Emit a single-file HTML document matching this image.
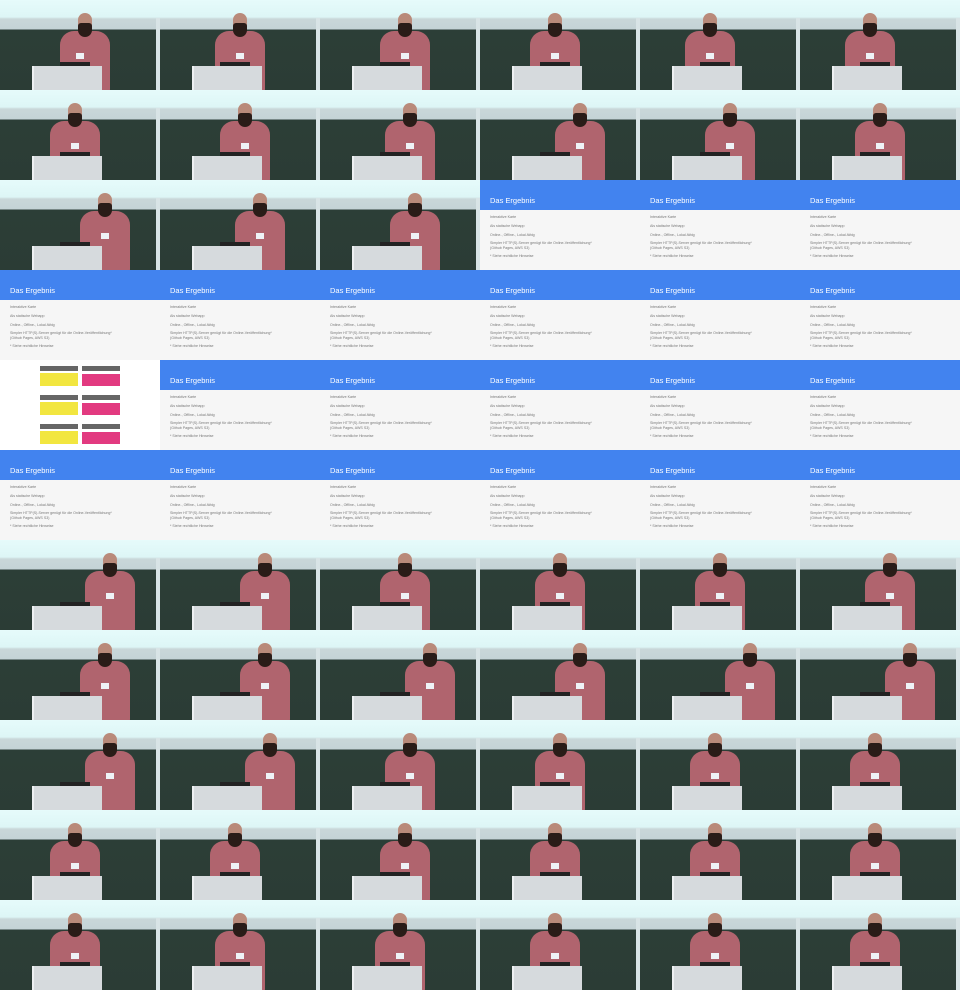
<!DOCTYPE html>
<html><head><meta charset="utf-8"><style>
*{margin:0;padding:0;box-sizing:border-box}
body{width:960px;height:990px;overflow:hidden;background:#fff;font-family:"Liberation Sans",sans-serif}
.g{display:grid;grid-template-columns:repeat(6,160px);grid-auto-rows:90px}
.c{position:relative;width:160px;height:90px;overflow:hidden}
.s{background:linear-gradient(#e6fbfb 0,#ddf6f6 17px,#c9d7d9 19px,#c4d3d6 29px,#2c3e37 30px,#2b3c35 100%)}
.s::before{content:"";position:absolute;right:0;top:18px;width:4px;height:72px;background:#d8e4e6}
.s::after{content:"";position:absolute;left:32px;top:66px;width:68px;height:24px;background:#d6dadd;border-left:2px solid #eef0f2}
.s i{position:absolute;top:31px;width:50px;height:62px;margin-left:-25px;background:#b0646e;border-radius:14px 14px 4px 4px}
.s i::before{content:"";position:absolute;left:18px;top:-18px;width:14px;height:20px;background:#b98a7a;border-radius:7px 7px 6px 6px}
.s i::after{content:"";position:absolute;left:18px;top:-8px;width:14px;height:14px;background:#2a1c18;border-radius:3px 3px 7px 7px}
.s b{position:absolute;top:53px;width:8px;height:6px;margin-left:-4px;background:#eef2f6}
.s u{position:absolute;left:60px;top:62px;width:30px;height:4px;background:#222}
.p{background:#f6f6f6}
.p .h{height:30px;background:#4283ef;color:#fff;font-size:7.5px;padding:17px 0 0 10px;line-height:8px}
.p .t{color:#777;font-size:3.6px;line-height:4.2px;padding:5px 0 0 10px}
.p .t div{margin-bottom:4.6px}
.m{background:#fff}
.m div{position:absolute;width:38px;height:26px}
</style></head><body><div class="g">
<div class="c s"><i style="left:85px"></i><b style="left:80px"></b><u></u></div>
<div class="c s"><i style="left:80px"></i><b style="left:80px"></b><u></u></div>
<div class="c s"><i style="left:85px"></i><b style="left:85px"></b><u></u></div>
<div class="c s"><i style="left:75px"></i><b style="left:75px"></b><u></u></div>
<div class="c s"><i style="left:70px"></i><b style="left:70px"></b><u></u></div>
<div class="c s"><i style="left:70px"></i><b style="left:70px"></b><u></u></div>

<div class="c s"><i style="left:75px"></i><b style="left:75px"></b><u></u></div>
<div class="c s"><i style="left:85px"></i><b style="left:85px"></b><u></u></div>
<div class="c s"><i style="left:90px"></i><b style="left:90px"></b><u></u></div>
<div class="c s"><i style="left:100px"></i><b style="left:100px"></b><u></u></div>
<div class="c s"><i style="left:90px"></i><b style="left:90px"></b><u></u></div>
<div class="c s"><i style="left:80px"></i><b style="left:80px"></b><u></u></div>

<div class="c s"><i style="left:105px"></i><b style="left:105px"></b><u></u></div>
<div class="c s"><i style="left:100px"></i><b style="left:100px"></b><u></u></div>
<div class="c s"><i style="left:95px"></i><b style="left:95px"></b><u></u></div>
<div class="c p"><div class="h">Das Ergebnis</div><div class="t"><div>Interaktive Karte</div><div>Als statische Webapp</div><div>Online-, Offline-, Lokal-fähig</div><div>Simpler HTTP(S)-Server genügt für die Online-Veröffentlichung*<br>(Github Pages, AWS S3)</div><div>* Siehe rechtliche Hinweise</div></div></div>
<div class="c p"><div class="h">Das Ergebnis</div><div class="t"><div>Interaktive Karte</div><div>Als statische Webapp</div><div>Online-, Offline-, Lokal-fähig</div><div>Simpler HTTP(S)-Server genügt für die Online-Veröffentlichung*<br>(Github Pages, AWS S3)</div><div>* Siehe rechtliche Hinweise</div></div></div>
<div class="c p"><div class="h">Das Ergebnis</div><div class="t"><div>Interaktive Karte</div><div>Als statische Webapp</div><div>Online-, Offline-, Lokal-fähig</div><div>Simpler HTTP(S)-Server genügt für die Online-Veröffentlichung*<br>(Github Pages, AWS S3)</div><div>* Siehe rechtliche Hinweise</div></div></div>

<div class="c p"><div class="h">Das Ergebnis</div><div class="t"><div>Interaktive Karte</div><div>Als statische Webapp</div><div>Online-, Offline-, Lokal-fähig</div><div>Simpler HTTP(S)-Server genügt für die Online-Veröffentlichung*<br>(Github Pages, AWS S3)</div><div>* Siehe rechtliche Hinweise</div></div></div>
<div class="c p"><div class="h">Das Ergebnis</div><div class="t"><div>Interaktive Karte</div><div>Als statische Webapp</div><div>Online-, Offline-, Lokal-fähig</div><div>Simpler HTTP(S)-Server genügt für die Online-Veröffentlichung*<br>(Github Pages, AWS S3)</div><div>* Siehe rechtliche Hinweise</div></div></div>
<div class="c p"><div class="h">Das Ergebnis</div><div class="t"><div>Interaktive Karte</div><div>Als statische Webapp</div><div>Online-, Offline-, Lokal-fähig</div><div>Simpler HTTP(S)-Server genügt für die Online-Veröffentlichung*<br>(Github Pages, AWS S3)</div><div>* Siehe rechtliche Hinweise</div></div></div>
<div class="c p"><div class="h">Das Ergebnis</div><div class="t"><div>Interaktive Karte</div><div>Als statische Webapp</div><div>Online-, Offline-, Lokal-fähig</div><div>Simpler HTTP(S)-Server genügt für die Online-Veröffentlichung*<br>(Github Pages, AWS S3)</div><div>* Siehe rechtliche Hinweise</div></div></div>
<div class="c p"><div class="h">Das Ergebnis</div><div class="t"><div>Interaktive Karte</div><div>Als statische Webapp</div><div>Online-, Offline-, Lokal-fähig</div><div>Simpler HTTP(S)-Server genügt für die Online-Veröffentlichung*<br>(Github Pages, AWS S3)</div><div>* Siehe rechtliche Hinweise</div></div></div>
<div class="c p"><div class="h">Das Ergebnis</div><div class="t"><div>Interaktive Karte</div><div>Als statische Webapp</div><div>Online-, Offline-, Lokal-fähig</div><div>Simpler HTTP(S)-Server genügt für die Online-Veröffentlichung*<br>(Github Pages, AWS S3)</div><div>* Siehe rechtliche Hinweise</div></div></div>

<div class="c m">
<div style="left:40px;top:4px;background:linear-gradient(#fff 0 2px,#666 2px 7px,#fff 7px 9px,#f2e640 9px 22px,#fff 22px)"></div>
<div style="left:82px;top:4px;background:linear-gradient(#fff 0 2px,#666 2px 7px,#fff 7px 10px,#e23a80 10px 22px,#fff 22px)"></div>
<div style="left:40px;top:33px;background:linear-gradient(#fff 0 2px,#666 2px 7px,#fff 7px 9px,#f2e640 9px 22px,#fff 22px)"></div>
<div style="left:82px;top:33px;background:linear-gradient(#fff 0 2px,#666 2px 7px,#fff 7px 10px,#e23a80 10px 22px,#fff 22px)"></div>
<div style="left:40px;top:62px;background:linear-gradient(#fff 0 2px,#666 2px 7px,#fff 7px 9px,#f2e640 9px 22px,#fff 22px)"></div>
<div style="left:82px;top:62px;background:linear-gradient(#fff 0 2px,#666 2px 7px,#fff 7px 10px,#e23a80 10px 22px,#fff 22px)"></div>
</div>
<div class="c p"><div class="h">Das Ergebnis</div><div class="t"><div>Interaktive Karte</div><div>Als statische Webapp</div><div>Online-, Offline-, Lokal-fähig</div><div>Simpler HTTP(S)-Server genügt für die Online-Veröffentlichung*<br>(Github Pages, AWS S3)</div><div>* Siehe rechtliche Hinweise</div></div></div>
<div class="c p"><div class="h">Das Ergebnis</div><div class="t"><div>Interaktive Karte</div><div>Als statische Webapp</div><div>Online-, Offline-, Lokal-fähig</div><div>Simpler HTTP(S)-Server genügt für die Online-Veröffentlichung*<br>(Github Pages, AWS S3)</div><div>* Siehe rechtliche Hinweise</div></div></div>
<div class="c p"><div class="h">Das Ergebnis</div><div class="t"><div>Interaktive Karte</div><div>Als statische Webapp</div><div>Online-, Offline-, Lokal-fähig</div><div>Simpler HTTP(S)-Server genügt für die Online-Veröffentlichung*<br>(Github Pages, AWS S3)</div><div>* Siehe rechtliche Hinweise</div></div></div>
<div class="c p"><div class="h">Das Ergebnis</div><div class="t"><div>Interaktive Karte</div><div>Als statische Webapp</div><div>Online-, Offline-, Lokal-fähig</div><div>Simpler HTTP(S)-Server genügt für die Online-Veröffentlichung*<br>(Github Pages, AWS S3)</div><div>* Siehe rechtliche Hinweise</div></div></div>
<div class="c p"><div class="h">Das Ergebnis</div><div class="t"><div>Interaktive Karte</div><div>Als statische Webapp</div><div>Online-, Offline-, Lokal-fähig</div><div>Simpler HTTP(S)-Server genügt für die Online-Veröffentlichung*<br>(Github Pages, AWS S3)</div><div>* Siehe rechtliche Hinweise</div></div></div>

<div class="c p"><div class="h">Das Ergebnis</div><div class="t"><div>Interaktive Karte</div><div>Als statische Webapp</div><div>Online-, Offline-, Lokal-fähig</div><div>Simpler HTTP(S)-Server genügt für die Online-Veröffentlichung*<br>(Github Pages, AWS S3)</div><div>* Siehe rechtliche Hinweise</div></div></div>
<div class="c p"><div class="h">Das Ergebnis</div><div class="t"><div>Interaktive Karte</div><div>Als statische Webapp</div><div>Online-, Offline-, Lokal-fähig</div><div>Simpler HTTP(S)-Server genügt für die Online-Veröffentlichung*<br>(Github Pages, AWS S3)</div><div>* Siehe rechtliche Hinweise</div></div></div>
<div class="c p"><div class="h">Das Ergebnis</div><div class="t"><div>Interaktive Karte</div><div>Als statische Webapp</div><div>Online-, Offline-, Lokal-fähig</div><div>Simpler HTTP(S)-Server genügt für die Online-Veröffentlichung*<br>(Github Pages, AWS S3)</div><div>* Siehe rechtliche Hinweise</div></div></div>
<div class="c p"><div class="h">Das Ergebnis</div><div class="t"><div>Interaktive Karte</div><div>Als statische Webapp</div><div>Online-, Offline-, Lokal-fähig</div><div>Simpler HTTP(S)-Server genügt für die Online-Veröffentlichung*<br>(Github Pages, AWS S3)</div><div>* Siehe rechtliche Hinweise</div></div></div>
<div class="c p"><div class="h">Das Ergebnis</div><div class="t"><div>Interaktive Karte</div><div>Als statische Webapp</div><div>Online-, Offline-, Lokal-fähig</div><div>Simpler HTTP(S)-Server genügt für die Online-Veröffentlichung*<br>(Github Pages, AWS S3)</div><div>* Siehe rechtliche Hinweise</div></div></div>
<div class="c p"><div class="h">Das Ergebnis</div><div class="t"><div>Interaktive Karte</div><div>Als statische Webapp</div><div>Online-, Offline-, Lokal-fähig</div><div>Simpler HTTP(S)-Server genügt für die Online-Veröffentlichung*<br>(Github Pages, AWS S3)</div><div>* Siehe rechtliche Hinweise</div></div></div>

<div class="c s"><i style="left:110px"></i><b style="left:110px"></b><u></u></div>
<div class="c s"><i style="left:105px"></i><b style="left:105px"></b><u></u></div>
<div class="c s"><i style="left:85px"></i><b style="left:85px"></b><u></u></div>
<div class="c s"><i style="left:80px"></i><b style="left:80px"></b><u></u></div>
<div class="c s"><i style="left:80px"></i><b style="left:80px"></b><u></u></div>
<div class="c s"><i style="left:90px"></i><b style="left:90px"></b><u></u></div>

<div class="c s"><i style="left:105px"></i><b style="left:105px"></b><u></u></div>
<div class="c s"><i style="left:105px"></i><b style="left:105px"></b><u></u></div>
<div class="c s"><i style="left:110px"></i><b style="left:110px"></b><u></u></div>
<div class="c s"><i style="left:100px"></i><b style="left:100px"></b><u></u></div>
<div class="c s"><i style="left:110px"></i><b style="left:110px"></b><u></u></div>
<div class="c s"><i style="left:110px"></i><b style="left:110px"></b><u></u></div>

<div class="c s"><i style="left:110px"></i><b style="left:110px"></b><u></u></div>
<div class="c s"><i style="left:110px"></i><b style="left:110px"></b><u></u></div>
<div class="c s"><i style="left:90px"></i><b style="left:90px"></b><u></u></div>
<div class="c s"><i style="left:80px"></i><b style="left:80px"></b><u></u></div>
<div class="c s"><i style="left:75px"></i><b style="left:75px"></b><u></u></div>
<div class="c s"><i style="left:75px"></i><b style="left:75px"></b><u></u></div>

<div class="c s"><i style="left:75px"></i><b style="left:75px"></b><u></u></div>
<div class="c s"><i style="left:75px"></i><b style="left:75px"></b><u></u></div>
<div class="c s"><i style="left:85px"></i><b style="left:85px"></b><u></u></div>
<div class="c s"><i style="left:75px"></i><b style="left:75px"></b><u></u></div>
<div class="c s"><i style="left:75px"></i><b style="left:75px"></b><u></u></div>
<div class="c s"><i style="left:75px"></i><b style="left:75px"></b><u></u></div>

<div class="c s"><i style="left:75px"></i><b style="left:75px"></b><u></u></div>
<div class="c s"><i style="left:80px"></i><b style="left:80px"></b><u></u></div>
<div class="c s"><i style="left:80px"></i><b style="left:80px"></b><u></u></div>
<div class="c s"><i style="left:75px"></i><b style="left:75px"></b><u></u></div>
<div class="c s"><i style="left:75px"></i><b style="left:75px"></b><u></u></div>
<div class="c s"><i style="left:75px"></i><b style="left:75px"></b><u></u></div>
</div></body></html>
